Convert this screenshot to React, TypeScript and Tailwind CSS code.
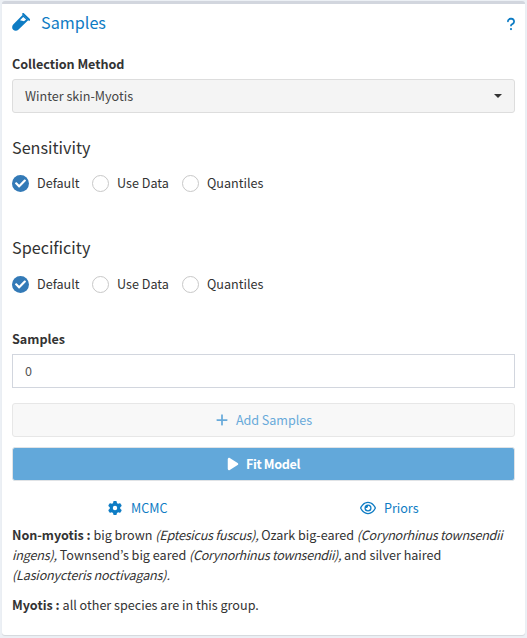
import { useState } from "react";
import { FaGear, FaRegEye, FaPlay, FaPlus, FaQuestion } from "react-icons/fa6";
import { FaCheck } from "react-icons/fa";

const MODES = [
  { name: "Default", width: "w-[80px]" },
  { name: "Use Data", width: "w-[90px]" },
  { name: "Quantiles", width: "w-[90px]" },
];

function VialIcon() {
  return (
    <svg width="18" height="18" viewBox="0 0 18 18" fill="currentColor" aria-hidden="true">
      <path d="M11.2 1 17.2 6.8" fill="none" stroke="currentColor" strokeWidth="2" strokeLinecap="round" />
      <path
        fillRule="evenodd"
        d="M10.8 1.8 16.4 7 6.6 16.6C5 18.2 2.6 18.2 1.2 16.8-.2 15.4-.2 13 1.2 11.5ZM11.2 3.9 8 7.3 12 8.3 14.1 6.5Z"
      />
    </svg>
  );
}

function ModeGroup({ title, gap }: { title: string; gap: string }) {
  const [selected, setSelected] = useState("Default");
  return (
    <section>
      <h4 className="h-5 text-[16.2px] leading-5">{title}</h4>
      <div className={`flex h-[17px] ${gap}`} role="radiogroup" aria-label={title}>
        {MODES.map((m) => (
          <button
            key={m.name}
            type="button"
            role="radio"
            aria-checked={selected === m.name}
            onClick={() => setSelected(m.name)}
            className={`flex items-center gap-2 whitespace-nowrap ${m.width}`}
          >
            {selected === m.name ? (
              <span className="flex size-[17px] shrink-0 items-center justify-center rounded-full bg-[#337ab7] text-white">
                <FaCheck size={11} className="-mt-px" />
              </span>
            ) : (
              <span className="size-[17px] shrink-0 rounded-full border border-[#c8c8c8] bg-white" />
            )}
            <span className="pb-[2px]">{m.name}</span>
          </button>
        ))}
      </div>
    </section>
  );
}

export default function App() {
  return (
    <div className="h-[638px] w-[527px] bg-[#ecf0f5] pt-px pl-[2px] font-['Noto_Sans_CJK_KR','Noto_Sans',sans-serif] text-[12.6px] leading-5 text-[#333]">
      <main className="flex h-[634px] w-[523px] flex-col rounded-[3px] border-t-[3px] border-[#d2d6de] bg-white px-[10px] shadow-[0_1px_1px_rgba(0,0,0,0.1)]">
        <header className="mt-[8px] flex h-5 items-center text-[#0e7cc4]">
          <VialIcon />
          <h3 className="ml-[11px] flex-1 text-[16.2px] leading-5">Samples</h3>
          <FaQuestion size={14} className="mt-[3px] -mr-[3px]" />
        </header>

        <label className="mt-[22px] h-5 font-bold tracking-[-0.04px]">Collection Method</label>
        <button type="button" className="mt-[5px] flex h-[34px] items-center justify-between rounded-[3px] border border-[#ddd] bg-[#f4f4f4] px-3 text-[#444]">
          <span>Winter skin-Myotis</span>
          <span className="border-x-4 border-t-4 border-x-transparent border-t-[#333]" />
        </button>

        <div className="mt-[24px]"><ModeGroup title="Sensitivity" gap="mt-[18px]" /></div>
        <div className="mt-[45px]"><ModeGroup title="Specificity" gap="mt-[19px]" /></div>

        <label htmlFor="samples" className="mt-[36px] h-5 font-bold">Samples</label>
        <input id="samples" defaultValue="0" className="mt-[5px] h-[34px] border border-[#d2d6de] bg-white px-3 pb-px text-[#555] outline-none" />

        <button type="button" className="mt-[15px] flex h-[34px] items-center justify-center gap-2 rounded-[3px] border border-[#e7e7e7] bg-[#f8f8f8] text-[#68aada]">
          <FaPlus size={14} />
          <span className="-ml-px tracking-[-0.05px]">Add Samples</span>
        </button>
        <button type="button" className="mt-[10px] flex h-[34px] items-center justify-center gap-[6px] rounded-[3px] border border-[#e0e3e6] bg-[#62a8da] pr-px font-bold tracking-[-0.38px] text-white">
          <FaPlay size={14} />
          <span>Fit Model</span>
        </button>

        <nav className="mt-[17px] grid h-5 grid-cols-2 text-[#0e7cc4]">
          <a className="flex items-center justify-center gap-2"><FaGear size={14} /><span className="pl-px tracking-[-0.05px]">MCMC</span></a>
          <a className="flex items-center justify-center gap-2"><FaRegEye size={16} /><span>Priors</span></a>
        </nav>

        <div className="mt-[7px] whitespace-nowrap">
          <p><b className="tracking-[-0.05px]">Non-myotis :</b> big brown <i className="tracking-[-0.27px]">(Eptesicus fuscus),</i> Ozark big-eared <i className="tracking-[-0.28px]">(Corynorhinus townsendii</i></p>
          <p><i className="tracking-[-0.18px]">ingens),</i> Townsend’s big eared <i className="tracking-[-0.3px]">(Corynorhinus townsendii),</i> and silver haired</p>
          <p><i className="tracking-[-0.18px]">(Lasionycteris noctivagans).</i></p>
          <p className="mt-[10px]"><b>Myotis :</b> all other species are in this group.</p>
        </div>
      </main>
    </div>
  );
}
